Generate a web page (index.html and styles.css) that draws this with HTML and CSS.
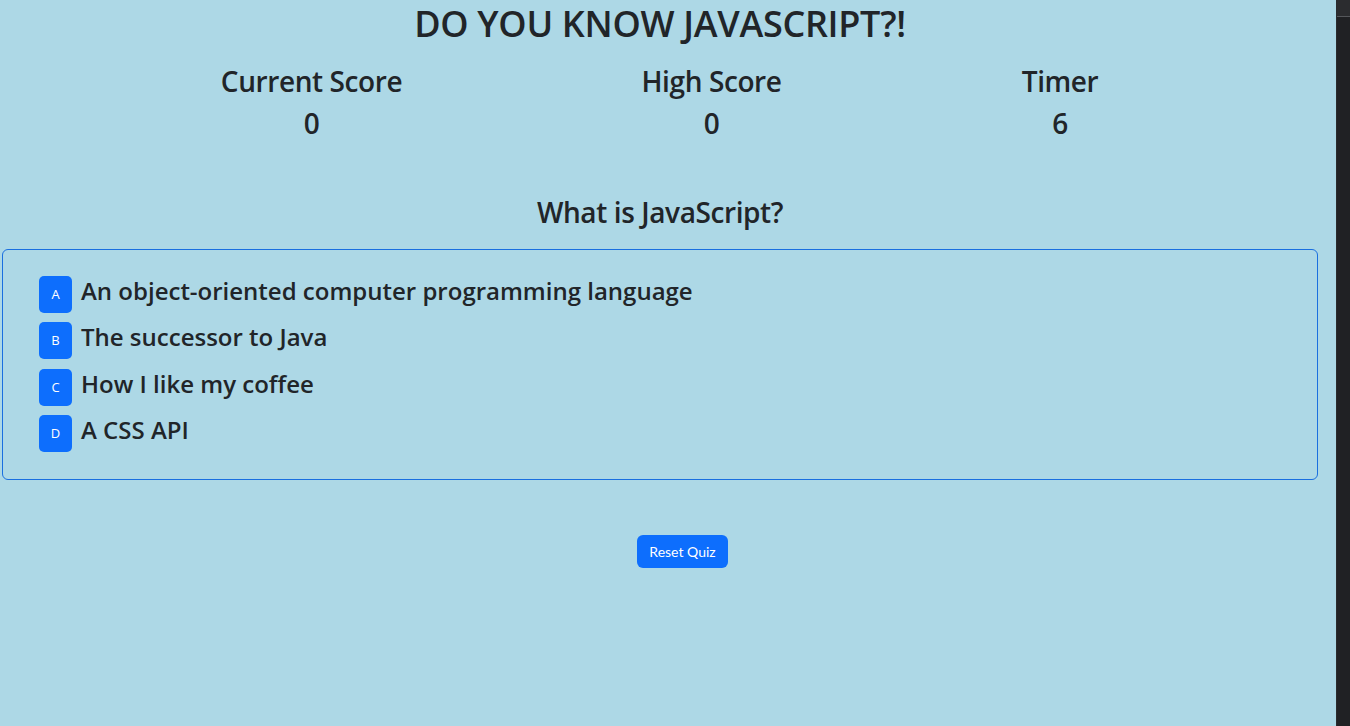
FILE: index.html
```html
<!DOCTYPE html>
<html lang="en">
<head>
<meta charset="utf-8">
<title>Do You Know JavaScript?!</title>
<link rel="stylesheet" href="styles.css">
</head>
<body>
<div class="page">
  <main class="main">
    <h1 class="title">DO YOU KNOW JAVASCRIPT?!</h1>
    <div class="scores">
      <div class="stat stat-current">
        <h3 class="stat-label">Current Score</h3>
        <h3 class="stat-value">0</h3>
      </div>
      <div class="stat stat-high">
        <h3 class="stat-label">High Score</h3>
        <h3 class="stat-value">0</h3>
      </div>
      <div class="stat stat-timer">
        <h3 class="stat-label">Timer</h3>
        <h3 class="stat-value">6</h3>
      </div>
    </div>
    <h3 class="question">What is JavaScript?</h3>
    <div class="card">
      <div class="answer">
        <button class="badge">A</button>
        <h4 class="answer-text">An object-oriented computer programming language</h4>
      </div>
      <div class="answer">
        <button class="badge">B</button>
        <h4 class="answer-text">The successor to Java</h4>
      </div>
      <div class="answer">
        <button class="badge">C</button>
        <h4 class="answer-text">How I like my coffee</h4>
      </div>
      <div class="answer">
        <button class="badge">D</button>
        <h4 class="answer-text">A CSS API</h4>
      </div>
    </div>
    <div class="actions">
      <button class="reset">Reset Quiz</button>
    </div>
  </main>
  <aside class="side-strip">
    <div class="side-top"></div>
  </aside>
</div>
</body>
</html>
```

FILE: styles.css
```css
* {
  box-sizing: border-box;
}

html, body {
  margin: 0;
  padding: 0;
}

body {
  background: #add8e6;
  color: #212529;
  font-family: "Open Sans", "Noto Sans", "DejaVu Sans", sans-serif;
}

.page {
  display: flex;
  height: 726px;
  overflow: hidden;
}

.main {
  width: 1336px;
  flex: none;
}

.title {
  width: 1320px;
  margin: 0;
  padding-top: 2px;
  text-align: center;
  font-size: 36px;
  line-height: 1.2;
  font-weight: 600;
  letter-spacing: -0.3px;
}

.scores {
  width: 1320px;
  display: flex;
  justify-content: center;
  gap: 240px;
  margin-top: 20px;
}

.stat {
  display: flex;
  flex-direction: column;
  align-items: center;
}

.stat-current { width: 178px; }
.stat-high { width: 142px; }
.stat-timer { width: 75px; }

.stat-label,
.stat-value {
  margin: 0;
  font-size: 28px;
  line-height: 1.2;
  font-weight: 600;
  white-space: nowrap;
  letter-spacing: -0.4px;
}

.stat-value {
  margin-top: 8px;
}

.question {
  width: 1320px;
  margin: 56px 0 0;
  text-align: center;
  font-size: 28px;
  line-height: 1.2;
  font-weight: 600;
  letter-spacing: -0.4px;
}

.card {
  width: 1316px;
  margin: 19px 0 0 2px;
  border: 1px solid #1a6fe0;
  border-radius: 6px;
  padding: 26px 36px 27px;
  display: flex;
  flex-direction: column;
  gap: 9.5px;
}

.answer {
  display: flex;
  align-items: flex-start;
  gap: 9px;
}

.badge {
  width: 33px;
  height: 37px;
  padding: 0;
  border: none;
  border-radius: 5px;
  background: #0d6efd;
  color: #fff;
  font-family: inherit;
  font-size: 13px;
  line-height: 1;
  flex: none;
}

.answer-text {
  margin: 0;
  padding-top: 1px;
  font-size: 24px;
  line-height: 1.2;
  font-weight: 600;
  letter-spacing: 0;
}

.actions {
  width: 1320px;
  display: flex;
  justify-content: center;
  padding-left: 45px;
  margin-top: 55px;
}

.reset {
  height: 33px;
  padding: 0 12px;
  border: none;
  border-radius: 6px;
  background: #0d6efd;
  color: #fff;
  font-family: "Lato", "Open Sans", sans-serif;
  font-size: 14px;
  line-height: 1;
}

.side-strip {
  width: 14px;
  flex: none;
  background: #202124;
  border-left: 1px solid #2a2b2e;
}

.side-top {
  height: 17px;
  background: #2b2c2f;
  border-bottom: 1px solid #55575b;
}
```
